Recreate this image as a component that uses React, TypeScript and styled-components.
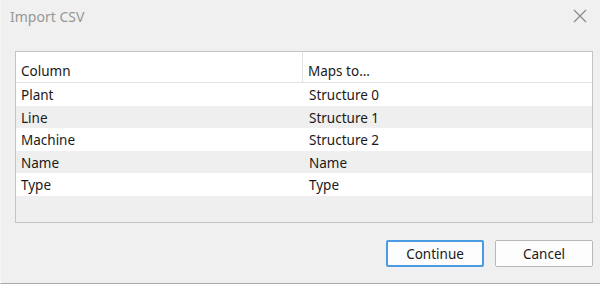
import React from 'react';
import styled, {createGlobalStyle} from 'styled-components';

const GlobalStyle = createGlobalStyle`
  html, body {
    margin: 0;
    padding: 0;
    background: #f0f0f0;
  }
  body {
    font-family: "Noto Sans", "Open Sans", sans-serif;
  }
`;

interface Mapping {
  column: string;
  target: string;
}

const mappings: Array<Mapping> = [
  {column: 'Plant', target: 'Structure 0'},
  {column: 'Line', target: 'Structure 1'},
  {column: 'Machine', target: 'Structure 2'},
  {column: 'Name', target: 'Name'},
  {column: 'Type', target: 'Type'},
];

const Window = styled.div`
  width: 600px;
  height: 284px;
  box-sizing: border-box;
  background: #f0f0f0;
  border-left: 1px solid #f6f6f6;
  border-bottom: 1px solid #a8a8a8;
  display: flex;
  flex-direction: column;
  color: #1a1a1a;
`;

const TitleBar = styled.div`
  height: 34px;
  display: flex;
  align-items: center;
  justify-content: space-between;
  padding: 0 12px 0 9px;
`;

const Title = styled.span`
  font-size: 14px;
  color: #979797;
  margin-top: -2px;
`;

const CloseButton = styled.button`
  width: 16px;
  height: 16px;
  padding: 0;
  border: none;
  background: none;
  display: flex;
  align-items: center;
  justify-content: center;
  margin-top: -2px;
`;

const Body = styled.div`
  flex: 1;
  display: flex;
  flex-direction: column;
  padding: 17px 7px 16px 14px;
`;

const Grid = styled.div`
  height: 170px;
  border: 1px solid #c4c4c4;
  background: #efefef;
  display: flex;
  flex-direction: column;
`;

const HeaderRow = styled.div`
  height: 30px;
  display: grid;
  grid-template-columns: 287px 1fr;
  background: #fff;
  border-bottom: 1px solid #e2e2e2;
`;

const HeaderCell = styled.div<{$divider?: boolean}>`
  font-size: 13.5px;
  display: flex;
  align-items: flex-end;
  padding: 0 0 2px 5px;
  border-right: ${p => (p.$divider ? '1px solid #e2e2e2' : 'none')};
`;

const Row = styled.div<{$alt: boolean}>`
  height: 22.6px;
  display: grid;
  grid-template-columns: 288px 1fr;
  background: ${p => (p.$alt ? '#efefef' : '#ffffff')};
`;

const Cell = styled.div`
  font-size: 13.5px;
  line-height: 22px;
  padding: 1px 0 0 5px;
  white-space: nowrap;
`;

const Footer = styled.div`
  display: flex;
  justify-content: flex-end;
  gap: 11px;
  margin-top: auto;
`;

const Button = styled.button<{$primary?: boolean}>`
  width: 98px;
  height: 27px;
  box-sizing: border-box;
  font-family: inherit;
  font-size: 13.5px;
  color: #1a1a1a;
  background: #fdfdfd;
  border-radius: 2px;
  border: ${p => (p.$primary ? '2px solid #4a9be0' : '1px solid #b8b8b8')};
  padding: 0;
`;

const App = () => {
  return (
    <>
      <GlobalStyle />
      <Window>
        <TitleBar>
          <Title>Import CSV</Title>
          <CloseButton aria-label="Close">
            <svg width="14" height="14" viewBox="0 0 14 14">
              <path d="M1 1 L13 13 M13 1 L1 13" stroke="#8a8a8a" strokeWidth="1.2" />
            </svg>
          </CloseButton>
        </TitleBar>
        <Body>
          <Grid>
            <HeaderRow>
              <HeaderCell $divider>Column</HeaderCell>
              <HeaderCell>Maps to...</HeaderCell>
            </HeaderRow>
            {mappings.map((m, i) => (
              <Row key={m.column} $alt={i % 2 === 1}>
                <Cell>{m.column}</Cell>
                <Cell>{m.target}</Cell>
              </Row>
            ))}
          </Grid>
          <Footer>
            <Button type="button" $primary>Continue</Button>
            <Button type="button">Cancel</Button>
          </Footer>
        </Body>
      </Window>
    </>
  );
};

export default App;
